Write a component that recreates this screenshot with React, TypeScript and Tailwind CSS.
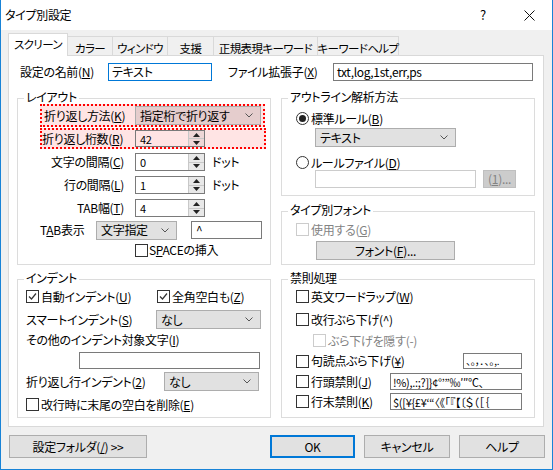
import React from 'react';

function Chevron() {
  return (
    <svg width="8" height="5" viewBox="0 0 8 5" className="shrink-0">
      <polyline points="0.5,0.5 4,4 7.5,0.5" fill="none" stroke="#555555" strokeWidth="1" />
    </svg>
  );
}

function Combo({ value, className }: { value: string; className: string }) {
  return (
    <div className={`flex items-center justify-between border border-[#adadad] pl-[4px] pr-[7px] ${className}`}>
      <span className="whitespace-nowrap">{value}</span>
      <Chevron />
    </div>
  );
}

function Spin({ value, pink = false }: { value: string; pink?: boolean }) {
  return (
    <div className={`flex w-[70px] border border-[#7a7a7a] ${pink ? 'h-[17px] bg-[#ffe4e4]' : 'h-[18px] bg-white'}`}>
      <span className="flex-1 pl-[4px] flex items-center text-[11px]">{value}</span>
      <div className={`w-[16px] flex flex-col border-l border-[#c8c8c8] ${pink ? 'bg-[#eed6d6]' : 'bg-[#e8e8e8]'}`}>
        <div className="flex-1 flex items-center justify-center border-b border-[#c8c8c8]">
          <svg width="7" height="4" viewBox="0 0 7 4">
            <path d="M0 4 L3.5 0 L7 4 Z" fill="#222222" />
          </svg>
        </div>
        <div className="flex-1 flex items-center justify-center">
          <svg width="7" height="4" viewBox="0 0 7 4">
            <path d="M0 0 L3.5 4 L7 0 Z" fill="#222222" />
          </svg>
        </div>
      </div>
    </div>
  );
}

function Check({ checked = false, disabled = false }: { checked?: boolean; disabled?: boolean }) {
  return (
    <span
      className={`w-[13px] h-[13px] border bg-white flex items-center justify-center shrink-0 ${
        disabled ? 'border-[#cccccc]' : 'border-[#333333]'
      }`}
    >
      {checked && (
        <svg width="9" height="9" viewBox="0 0 9 9">
          <path d="M1 4.5 L3.5 7 L8 1.5" stroke="#333333" strokeWidth="1.2" fill="none" />
        </svg>
      )}
    </span>
  );
}

function Radio({ checked = false }: { checked?: boolean }) {
  return (
    <span className="w-[13px] h-[13px] rounded-full border border-[#333333] bg-white flex items-center justify-center shrink-0">
      {checked && <span className="w-[7px] h-[7px] rounded-full bg-[#222222]" />}
    </span>
  );
}

function Group({ title, className, children }: { title: string; className: string; children: React.ReactNode }) {
  return (
    <div className={`border border-[#dcdcdc] flex flex-col ${className}`}>
      <div className="-mt-[9px] ml-[6px] px-[2px] bg-white w-fit leading-[14px]">{title}</div>
      {children}
    </div>
  );
}

const tabs = [
  { label: 'スクリーン', cls: 'w-[60px] h-[23px] -mb-px bg-white z-10 pt-[4px]' },
  { label: 'カラー', cls: 'w-[46px] h-[19px] -ml-px pt-[5px]' },
  { label: 'ウィンドウ', cls: 'w-[56px] h-[19px] -ml-px pt-[5px]' },
  { label: '支援', cls: 'w-[47px] h-[19px] -ml-px pt-[5px]' },
  { label: '正規表現キーワード', cls: 'w-[105px] h-[19px] -ml-px pt-[5px]' },
  { label: 'キーワードヘルプ', cls: 'w-[82px] h-[19px] -ml-px pt-[5px]' },
];

export default function App() {
  return (
    <div className="w-[553px] h-[470px] flex flex-col bg-[#f0f0f0] border-x border-b border-[#1883d7] text-[12px] leading-[14px] tracking-[-0.3px] text-black font-['Noto_Sans_CJK_JP',sans-serif] [font-feature-settings:'palt']">
      {/* title bar */}
      <div className="h-[30px] bg-white flex items-center shrink-0">
        <span className="pl-[4px]">タイプ別設定</span>
        <div className="ml-auto flex h-full">
          <div className="w-[46px] flex items-center justify-center text-[13px]">?</div>
          <div className="w-[46px] flex items-center justify-center">
            <svg width="11" height="11" viewBox="0 0 11 11">
              <path d="M0.5 0.5 L10.5 10.5 M10.5 0.5 L0.5 10.5" stroke="#111111" strokeWidth="1" />
            </svg>
          </div>
        </div>
      </div>

      {/* tabs */}
      <div className="h-[25px] flex items-end pl-[7px] shrink-0">
        {tabs.map(t => (
          <div key={t.label} className={`relative border border-b-0 border-[#d9d9d9] flex justify-center text-[11.5px] leading-[13px] tracking-[-0.6px] whitespace-nowrap ${t.cls}`}>
            {t.label}
          </div>
        ))}
      </div>

      {/* tab page */}
      <div className="ml-[7px] w-[536px] h-[372px] bg-white border border-[#d9d9d9] flex flex-col shrink-0">
        <div className="mt-[7px] h-[18px] flex items-center">
          <span className="ml-[11px] w-[88px]">設定の名前(<u>N</u>)</span>
          <div className="w-[104px] h-[18px] border border-[#0078d7] pl-[3px] flex items-center">テキスト</div>
          <span className="ml-[16px] w-[105px]">ファイル拡張子(<u>X</u>)</span>
          <div className="w-[200px] h-[18px] border border-[#7a7a7a] pl-[3px] flex items-center">txt,log,1st,err,ps</div>
        </div>

        <div className="mt-[17px] ml-[8px] flex gap-[10px]">
          {/* left column */}
          <div className="w-[254px] flex flex-col">
            <Group title="レイアウト" className="h-[167px]">
              <div className="ml-[22px] w-[225px] h-[23px] border-2 border-dotted border-[#ff0000] bg-[#ffe4e4] flex items-center">
                <span className="w-[93px] pl-[2px] whitespace-nowrap">折り返し方法(<u>K</u>)</span>
                <Combo value="指定桁で折り返す" className="w-[126px] h-[19px] bg-[#e5cdcd]" />
              </div>
              <div className="mt-px ml-[22px] w-[226px] h-[21px] border-2 border-dotted border-[#ff0000] bg-[#ffe4e4] flex items-center">
                <span className="w-[93px] whitespace-nowrap">折り返し桁数(<u>R</u>)</span>
                <Spin value="42" pink />
              </div>
              <div className="mt-[4px] h-[18px] flex items-center">
                <span className="w-[106px] text-right">文字の間隔(<u>C</u>)</span>
                <div className="ml-[11px]"><Spin value="0" /></div>
                <span className="ml-[7px]">ドット</span>
              </div>
              <div className="mt-[5px] h-[18px] flex items-center">
                <span className="w-[106px] text-right">行の間隔(<u>L</u>)</span>
                <div className="ml-[11px]"><Spin value="1" /></div>
                <span className="ml-[7px]">ドット</span>
              </div>
              <div className="mt-[5px] h-[18px] flex items-center">
                <span className="w-[106px] text-right">TAB幅(<u>T</u>)</span>
                <div className="ml-[11px]"><Spin value="4" /></div>
              </div>
              <div className="mt-[3px] h-[20px] flex items-center">
                <span className="ml-[22px] w-[56px]">T<u>A</u>B表示</span>
                <Combo value="文字指定" className="w-[81px] h-[19px] bg-[#e1e1e1]" />
                <div className="ml-[14px] w-[71px] h-[18px] border border-[#7a7a7a] pl-[4px] flex items-center">^</div>
              </div>
              <div className="mt-[3px] ml-[117px] flex items-center">
                <Check />
                <span className="ml-px">S<u>P</u>ACEの挿入</span>
              </div>
            </Group>

            <Group title="インデント" className="mt-[14px] h-[139px]">
              <div className="mt-[5px] h-[13px] flex items-center">
                <div className="ml-[8px] w-[131px] flex items-center">
                  <Check checked />
                  <span className="ml-[2px]">自動インデント(<u>U</u>)</span>
                </div>
                <Check checked />
                <span className="ml-[2px]">全角空白も(<u>Z</u>)</span>
              </div>
              <div className="mt-[7px] h-[19px] flex items-center">
                <span className="ml-[8px] w-[130px]">スマートインデント(<u>S</u>)</span>
                <Combo value="なし" className="w-[105px] h-[19px] bg-[#e1e1e1]" />
              </div>
              <div className="mt-[4px] ml-[8px] h-[14px]">その他のインデント対象文字(<u>I</u>)</div>
              <div className="mt-[5px] ml-[61px] w-[181px] h-[17px] border border-[#7a7a7a]" />
              <div className="mt-[3px] h-[19px] flex items-center">
                <span className="ml-[8px] w-[138px]">折り返し行インデント(<u>2</u>)</span>
                <Combo value="なし" className="w-[95px] h-[19px] bg-[#e1e1e1]" />
              </div>
              <div className="mt-[7px] ml-[8px] h-[13px] flex items-center">
                <Check />
                <span className="ml-[2px]">改行時に末尾の空白を削除(<u>E</u>)</span>
              </div>
            </Group>
          </div>

          {/* right column */}
          <div className="w-[254px] flex flex-col">
            <Group title="アウトライン解析方法" className="h-[98px]">
              <div className="mt-[8px] ml-[14px] h-[13px] flex items-center">
                <Radio checked />
                <span className="ml-[2px]">標準ルール(<u>B</u>)</span>
              </div>
              <Combo value="テキスト" className="mt-[3px] ml-[33px] w-[141px] h-[19px] bg-[#e1e1e1]" />
              <div className="mt-[9px] ml-[14px] h-[13px] flex items-center">
                <Radio />
                <span className="ml-[2px]">ルールファイル(<u>D</u>)</span>
              </div>
              <div className="mt-px ml-[33px] flex">
                <div className="w-[161px] h-[18px] border border-[#cccccc] bg-white" />
                <div className="ml-[7px] w-[33px] h-[18px] border border-[#bfbfbf] bg-[#cccccc] text-[#838383] flex items-center justify-center">
                  (<u>1</u>)...
                </div>
              </div>
            </Group>

            <Group title="タイプ別フォント" className="mt-[15px] h-[54px]">
              <div className="mt-[6px] ml-[14px] h-[13px] flex items-center text-[#838383]">
                <Check disabled />
                <span className="ml-[2px]">使用する(<u>G</u>)</span>
              </div>
              <div className="mt-[5px] ml-[34px] w-[139px] h-[19px] border border-[#adadad] bg-[#e1e1e1] flex items-center justify-center">
                フォント(<u>F</u>)...
              </div>
            </Group>

            <Group title="禁則処理" className="mt-[14px] h-[139px]">
              <div className="mt-[5px] ml-[14px] h-[13px] flex items-center">
                <Check />
                <span className="ml-[2px]">英文ワードラップ(<u>W</u>)</span>
              </div>
              <div className="mt-[10px] ml-[14px] h-[13px] flex items-center">
                <Check />
                <span className="ml-[2px]">改行ぶら下げ(^)</span>
              </div>
              <div className="mt-[8px] ml-[31px] h-[13px] flex items-center text-[#838383]">
                <Check disabled />
                <span className="ml-[2px]">ぶら下げを隠す(-)</span>
              </div>
              <div className="mt-[6px] ml-[14px] mr-[12px] h-[16px] flex items-center">
                <Check />
                <span className="ml-[2px]">句読点ぶら下げ(<u>¥</u>)</span>
                <div className="ml-auto w-[59px] h-[16px] border border-[#7a7a7a] pl-[2px] text-[10px] flex items-center overflow-hidden whitespace-nowrap">
                  、。，．､｡,.
                </div>
              </div>
              <div className="mt-[4px] ml-[14px] mr-[12px] h-[17px] flex items-center">
                <Check />
                <span className="ml-[2px]">行頭禁則(<u>J</u>)</span>
                <div className="ml-auto w-[132px] h-[17px] border border-[#7a7a7a] pl-[2px] text-[11px] flex items-center overflow-hidden whitespace-nowrap">
                  !%),.:;?]&#125;¢°’”‰′″℃、
                </div>
              </div>
              <div className="mt-[3px] ml-[14px] mr-[12px] h-[17px] flex items-center">
                <Check />
                <span className="ml-[2px]">行末禁則(<u>K</u>)</span>
                <div className="ml-auto w-[132px] h-[17px] border border-[#7a7a7a] pl-[2px] text-[11px] flex items-center overflow-hidden whitespace-nowrap">
                  $([¥&#123;£¥‘“〈《「『【〔＄（［｛
                </div>
              </div>
            </Group>
          </div>
        </div>
      </div>

      {/* bottom buttons */}
      <div className="mt-[8px] h-[23px] flex shrink-0">
        <div className="ml-[8px] w-[138px] border border-[#adadad] bg-[#e1e1e1] flex items-center justify-center">
          設定フォルダ(<u>/</u>) &gt;&gt;
        </div>
        <div className="ml-auto w-[85px] border-2 border-[#0078d7] bg-[#e1e1e1] flex items-center justify-center">OK</div>
        <div className="ml-[9px] w-[86px] border border-[#adadad] bg-[#e1e1e1] flex items-center justify-center">キャンセル</div>
        <div className="ml-[9px] mr-[7px] w-[86px] border border-[#adadad] bg-[#e1e1e1] flex items-center justify-center">ヘルプ</div>
      </div>
    </div>
  );
}
